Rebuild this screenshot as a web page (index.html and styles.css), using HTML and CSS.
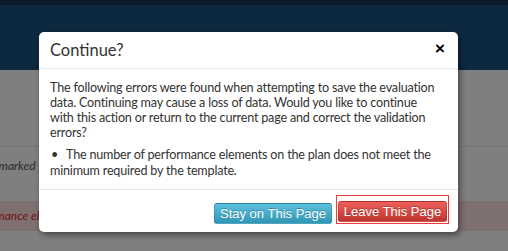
FILE: index.html
```html
<!DOCTYPE html>
<html lang="en">
<head>
  <meta charset="UTF-8">
  <meta name="viewport" content="width=device-width, initial-scale=1.0">
  <title>Continue?</title>
  <link rel="stylesheet" href="styles.css">
</head>
<body>
  <header>
    <div class="topstrip"></div>
    <div class="navbar"></div>
  </header>
  <main>
    <div class="blank"></div>
    <div class="note">Fields marked with an asterisk are required.</div>
    <div class="alert">Performance elements are missing on the plan.</div>
  </main>

  <div class="modal">
    <div class="modal-header">
      <h3>Continue?</h3>
      <span class="close">&times;</span>
    </div>
    <div class="modal-body">
      <p>The following errors were found when attempting to save the evaluation data. Continuing may cause a loss of data. Would you like to continue<br>with this action or return to the current page and correct the validation errors?</p>
      <div class="error-item"><span class="dot">&bull;</span>The number of performance elements on the plan does not meet the minimum required by the template.</div>
    </div>
    <div class="modal-footer">
      <button class="btn btn-info">Stay on This Page</button>
      <span class="focus"><button class="btn btn-danger">Leave This Page</button></span>
    </div>
  </div>
</body>
</html>
```

FILE: styles.css
```css
body {
  margin: 0;
  padding: 0;
  width: 508px;
  height: 251px;
  overflow: hidden;
  background-color: #7f7f7f;
  font-family: Lato, "Open Sans", sans-serif;
  position: relative;
}

.topstrip {
  height: 5px;
  background-color: #0b1b29;
}

.navbar {
  height: 65px;
  background-color: #0d2940;
}

.blank {
  height: 76px;
  border-bottom: 1px solid #747474;
}

.note {
  height: 38px;
  line-height: 38px;
  margin-left: -33px;
  font-size: 12px;
  font-style: italic;
  color: #2a2a2a;
  white-space: nowrap;
}

.alert {
  margin-top: 16px;
  height: 30px;
  line-height: 30px;
  margin-left: -35px;
  background-color: #7f7070;
  font-size: 12px;
  font-style: italic;
  color: #6e0f0f;
  white-space: nowrap;
}

/* ventana modal */
.modal {
  position: absolute;
  left: 39px;
  top: 32px;
  width: 419px;
  background: white;
  border-radius: 5px;
  box-shadow: 2px 3px 6px rgba(0, 0, 0, 0.45);
  color: #333;
}

.modal-header {
  display: flex;
  justify-content: space-between;
  align-items: center;
  padding: 8px 11px 7px 11px;
  border-bottom: 1px solid #eeeeee;
}

.modal-header h3 {
  margin: 0;
  font-size: 16.5px;
  font-weight: normal;
  line-height: 21px;
  color: #333;
}

.close {
  font-family: Arial, sans-serif;
  font-weight: bold;
  font-size: 17px;
  line-height: 17px;
  color: #000;
  margin-top: -4px;
  margin-right: 2px;
}

.modal-body {
  padding: 11px 11px 10px 11px;
  font-size: 12.6px;
  letter-spacing: -0.2px;
  line-height: 15px;
}

.modal-body p {
  margin: 0 0 7px 0;
}

.error-item {
  line-height: 16px;
}

.dot {
  display: inline-block;
  width: 15px;
  padding-left: 1px;
}

.modal-footer {
  display: flex;
  justify-content: flex-end;
  align-items: flex-end;
  gap: 4px;
  padding: 5px 9px 8px 11px;
  border-top: 1px solid #e5e5e5;
}

.btn {
  font-family: Arial, "Liberation Sans", sans-serif;
  font-size: 13px;
  line-height: 19px;
  height: 21px;
  padding: 0;
  white-space: nowrap;
  border-radius: 3px;
  border: 1px solid rgba(0, 0, 0, 0.12);
  color: white;
  text-shadow: 0 -1px 0 rgba(0, 0, 0, 0.25);
  cursor: pointer;
}

.btn-info {
  width: 118px;
  background-image: linear-gradient(#5bc0de, #2f96b4);
}

.btn-danger {
  width: 109px;
  background-image: linear-gradient(#ee5f5b, #bd362f);
}

.focus {
  display: inline-block;
  border: 1.5px solid #f0393d;
  padding: 4px 1px 1px 1px;
}
```
